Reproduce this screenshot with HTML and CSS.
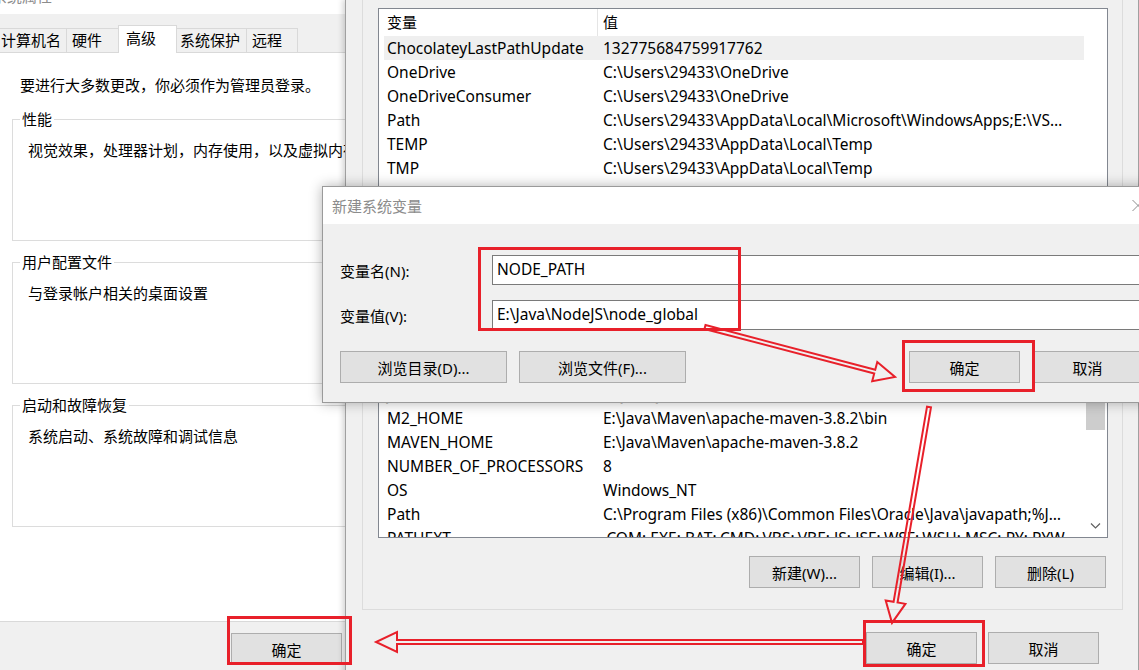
FILE: index.html
```html
<!DOCTYPE html>
<html lang="zh-CN">
<head>
    <meta charset="UTF-8">
    <meta name="viewport" content="width=device-width, initial-scale=1.0">
    <title>环境变量</title>
    <link rel="stylesheet" href="styles.css">
</head>
<body>
<div class="desktop">

    <!-- 系统属性 -->
    <div class="window sys-props">
        <div class="title-bar"><span>系统属性</span></div>
        <div class="tabs">
            <span class="tab">计算机名</span>
            <span class="tab">硬件</span>
            <span class="tab active">高级</span>
            <span class="tab">系统保护</span>
            <span class="tab">远程</span>
        </div>
        <div class="tab-panel">
            <p class="note">要进行大多数更改，你必须作为管理员登录。</p>
            <fieldset class="group">
                <legend>性能</legend>
                <p>视觉效果，处理器计划，内存使用，以及虚拟内存</p>
            </fieldset>
            <fieldset class="group">
                <legend>用户配置文件</legend>
                <p>与登录帐户相关的桌面设置</p>
            </fieldset>
            <fieldset class="group">
                <legend>启动和故障恢复</legend>
                <p>系统启动、系统故障和调试信息</p>
            </fieldset>
        </div>
        <div class="footer">
            <button class="btn">确定</button>
            <button class="btn">取消</button>
            <button class="btn">应用(A)</button>
        </div>
    </div>

    <!-- 环境变量 -->
    <div class="window env-vars">
        <div class="group-box user">
            <div class="var-list user">
                <div class="list-body">
                    <div class="list-head"><span class="cell">变量</span><span class="cell value">值</span></div>
                    <div class="list-row selected"><span class="cell">ChocolateyLastPathUpdate</span><span class="cell value">132775684759917762</span></div>
                    <div class="list-row"><span class="cell">OneDrive</span><span class="cell value">C:\Users\29433\OneDrive</span></div>
                    <div class="list-row"><span class="cell">OneDriveConsumer</span><span class="cell value">C:\Users\29433\OneDrive</span></div>
                    <div class="list-row"><span class="cell">Path</span><span class="cell value">C:\Users\29433\AppData\Local\Microsoft\WindowsApps;E:\VSCode\Microsoft VS Code\bin;E:\Java\NodeJS\node_global</span></div>
                    <div class="list-row"><span class="cell">TEMP</span><span class="cell value">C:\Users\29433\AppData\Local\Temp</span></div>
                    <div class="list-row"><span class="cell">TMP</span><span class="cell value">C:\Users\29433\AppData\Local\Temp</span></div>
                </div>
                <div class="scroll"></div>
            </div>
        </div>

        <div class="group-box system">
            <div class="var-list system">
                <div class="list-body">
                    <div class="list-head"><span class="cell">变量</span><span class="cell value">值</span></div>
                    <div class="list-row"><span class="cell">ChocolateyInstall</span><span class="cell value">C:\ProgramData\chocolatey</span></div>
                    <div class="list-row"><span class="cell">ComSpec</span><span class="cell value">C:\Windows\system32\cmd.exe</span></div>
                    <div class="list-row"><span class="cell">DriverData</span><span class="cell value">C:\Windows\System32\Drivers\DriverData</span></div>
                    <div class="list-row"><span class="cell">JAVA_HOME</span><span class="cell value">E:\Java\JDK</span></div>
                    <div class="list-row"><span class="cell">M2_HOME</span><span class="cell value">E:\Java\Maven\apache-maven-3.8.2\bin</span></div>
                    <div class="list-row"><span class="cell">MAVEN_HOME</span><span class="cell value">E:\Java\Maven\apache-maven-3.8.2</span></div>
                    <div class="list-row"><span class="cell">NUMBER_OF_PROCESSORS</span><span class="cell value">8</span></div>
                    <div class="list-row"><span class="cell">OS</span><span class="cell value">Windows_NT</span></div>
                    <div class="list-row"><span class="cell">Path</span><span class="cell value">C:\Program Files (x86)\Common Files\Oracle\Java\javapath;%JAVA_HOME%\bin;%MAVEN_HOME%\bin</span></div>
                    <div class="list-row"><span class="cell">PATHEXT</span><span class="cell value">.COM;.EXE;.BAT;.CMD;.VBS;.VBE;.JS;.JSE;.WSF;.WSH;.MSC;.PY;.PYW</span></div>
                </div>
                <div class="scroll">
                    <div class="thumb"></div>
                    <svg class="chevron" width="21" height="21" viewBox="0 0 21 21">
                        <path d="M6 7.5 L10.5 12 L15 7.5" fill="none" stroke="#606060" stroke-width="1.2"/>
                    </svg>
                </div>
            </div>
            <div class="group-actions">
                <button class="btn">新建(W)...</button>
                <button class="btn">编辑(I)...</button>
                <button class="btn">删除(L)</button>
            </div>
        </div>

        <div class="env-footer">
            <button class="btn">确定</button>
            <button class="btn">取消</button>
        </div>
    </div>

    <!-- 新建系统变量 -->
    <div class="dialog">
        <div class="title-bar">
            <span>新建系统变量</span>
            <svg class="close" width="46" height="37" viewBox="0 0 46 37">
                <path d="M17.5 13 L28.5 24 M28.5 13 L17.5 24" stroke="#8c8c8c" stroke-width="1"/>
            </svg>
        </div>
        <div class="dialog-body">
            <label class="field"><span>变量名(N):</span><input type="text" value="NODE_PATH"></label>
            <label class="field"><span>变量值(V):</span><input type="text" value="E:\Java\NodeJS\node_global"></label>
            <div class="dialog-actions">
                <button class="btn wide">浏览目录(D)...</button>
                <button class="btn wide">浏览文件(F)...</button>
                <button class="btn push">确定</button>
                <button class="btn">取消</button>
            </div>
        </div>
    </div>

    <!-- red marks: boxes and arrows -->
    <svg class="marks" width="1139" height="670" viewBox="0 0 1139 670">
        <g fill="none" stroke="#e8202a" stroke-width="3">
            <rect x="479.5" y="248.5" width="260" height="81"/>
            <rect x="903.5" y="341.5" width="130" height="49"/>
            <rect x="864.5" y="621.5" width="119" height="44"/>
            <rect x="228.5" y="617.5" width="122" height="46"/>
        </g>
        <g fill="none" stroke="#e8202a" stroke-width="2">
            <path transform="translate(705 327) rotate(14.74)" d="M0 -2 H175.5 V-10 L196.5 0 L175.5 10 V2 H0 Z"/>
            <path transform="translate(929 407) rotate(99.72)" d="M0 -2 H198 V-10 L219 0 L198 10 V2 H0 Z"/>
            <path transform="translate(863 642) rotate(180)" d="M0 -2 H466 V-10 L487 0 L466 10 V2 H0 Z"/>
        </g>
    </svg>
</div>
</body>
</html>
```

FILE: styles.css
```css
* {
    box-sizing: border-box;
}
body {
    margin: 0;
    font-family: "Noto Sans", "Noto Sans CJK SC", sans-serif;
    font-size: 15px;
    color: #000;
    background: #f0f0f0;
}
.desktop {
    position: relative;
    width: 1139px;
    height: 670px;
    overflow: hidden;
}
.window {
    position: absolute;
    background: #f0f0f0;
}
.title-bar {
    height: 38px;
    background: #fff;
    color: #8c8c8c;
    display: flex;
    align-items: center;
    justify-content: space-between;
    padding-left: 4px;
}
.btn {
    height: 32px;
    width: 111px;
    padding: 0;
    background: #e1e1e1;
    border: 1px solid #adadad;
    font: inherit;
    color: #000;
}

/* system properties */
.sys-props {
    left: -12px;
    top: -24px;
    width: 612px;
    height: 700px;
    z-index: 1;
}
.tabs {
    display: flex;
    align-items: flex-end;
    height: 38px;
    padding-left: 9px;
    position: relative;
    z-index: 1;
}
.tab {
    height: 24px;
    line-height: 22px;
    border: 1px solid #d9d9d9;
    border-bottom: 0;
    margin-left: -1px;
    padding-left: 5px;
    background: #f0f0f0;
    white-space: nowrap;
}
.tab:nth-child(1) { margin-left: 0; width: 70px; padding-left: 3px; }
.tab:nth-child(2) { width: 53px; }
.tab:nth-child(4) { width: 71px; padding-left: 3px; }
.tab:nth-child(5) { width: 52px; }
.tab.active {
    width: 59px;
    height: 28px;
    line-height: 25px;
    margin-bottom: -1px;
    padding-left: 7px;
    background: #fff;
    position: relative;
    z-index: 2;
}
.tab-panel {
    margin: 0 9px;
    height: 570px;
    background: #fff;
    border: 1px solid #d9d9d9;
    padding: 0 14px;
}
.note {
    margin: 22px 0 14px 8px;
    line-height: 20px;
}
.group {
    margin: 0 0 11px;
    padding: 0 15px;
    height: 132px;
    border: 1px solid #dcdcdc;
}
.group legend {
    margin-left: -8px;
    padding: 0 2px;
    line-height: 20px;
}
.group p {
    margin: 11px 0 0;
    line-height: 20px;
}
.footer {
    display: flex;
    justify-content: flex-end;
    gap: 12px;
    padding: 11px 12px 0 0;
}

/* environment variables */
.env-vars {
    left: 345px;
    top: -1px;
    width: 794px;
    height: 700px;
    border: 1px solid #a0a0a0;
    box-shadow: -2px 0 6px rgba(0, 0, 0, 0.18);
    padding: 0 15px 0 16px;
    z-index: 2;
}
.group-box {
    border: 1px solid #dcdcdc;
    padding: 0 14px 0 15px;
}
.group-box.user {
    margin-top: -20px;
    height: 270px;
    padding-top: 27px;
    overflow: hidden;
}
.group-box.system {
    margin-top: 12px;
    padding-top: 19px;
    padding-bottom: 21px;
}
.var-list {
    display: flex;
    background: #fff;
    border: 1px solid #828790;
    padding-left: 5px;
}
.var-list.user { height: 200px; }
.var-list.system { height: 256px; }
.list-body {
    flex: 1;
    min-width: 0;
    overflow: hidden;
}
.list-head,
.list-row {
    display: grid;
    grid-template-columns: 213px 1fr;
}
.list-head {
    height: 27px;
    line-height: 27px;
}
.list-row {
    height: 24px;
    line-height: 24px;
    font-size: 15.5px;
}
.list-row.selected {
    background: #efefef;
}
.cell {
    padding-left: 3px;
    white-space: nowrap;
    overflow: hidden;
}
.cell.value {
    padding: 0 14px 0 6px;
    text-overflow: ellipsis;
}
.list-head .cell.value {
    border-left: 1px solid #e5e5e5;
    padding-left: 5px;
}
.scroll {
    width: 23px;
    display: flex;
    flex-direction: column;
}
.thumb {
    margin: 97px 0 0 2px;
    width: 19px;
    height: 50px;
    background: #cdcdcd;
}
.chevron {
    margin-top: auto;
    margin-left: 1px;
    display: block;
}
.group-actions {
    display: flex;
    justify-content: flex-end;
    gap: 12px;
    margin-top: 18px;
    padding-right: 2px;
}
.env-footer {
    display: flex;
    justify-content: flex-end;
    gap: 11px;
    margin-top: 22px;
    padding-right: 24px;
}

/* new variable dialog */
.dialog {
    position: absolute;
    left: 322px;
    top: 186px;
    width: 840px;
    height: 217px;
    border: 1px solid #9a9a9a;
    background: #f0f0f0;
    box-shadow: 0 0 12px rgba(0, 0, 0, 0.3);
    z-index: 3;
}
.dialog .title-bar {
    height: 37px;
    padding-left: 9px;
}
.dialog .close {
    display: block;
}
.dialog-body {
    padding: 31px 17px 0;
}
.field {
    display: grid;
    grid-template-columns: 152px 1fr;
    align-items: center;
    margin-bottom: 15px;
}
.field input {
    height: 30px;
    border: 1px solid #7a7a7a;
    padding: 0 4px 2px;
    font: inherit;
    font-size: 15.5px;
    color: #000;
    background: #fff;
    outline: none;
}
.dialog-actions {
    display: flex;
    gap: 12px;
    margin-top: 21px;
    padding-right: 1px;
}
.dialog-actions .btn.wide {
    width: 167px;
}
.dialog-actions .btn.push {
    margin-left: auto;
}

/* annotation layer */
.marks {
    position: absolute;
    left: 0;
    top: 0;
    z-index: 10;
    pointer-events: none;
}
```
